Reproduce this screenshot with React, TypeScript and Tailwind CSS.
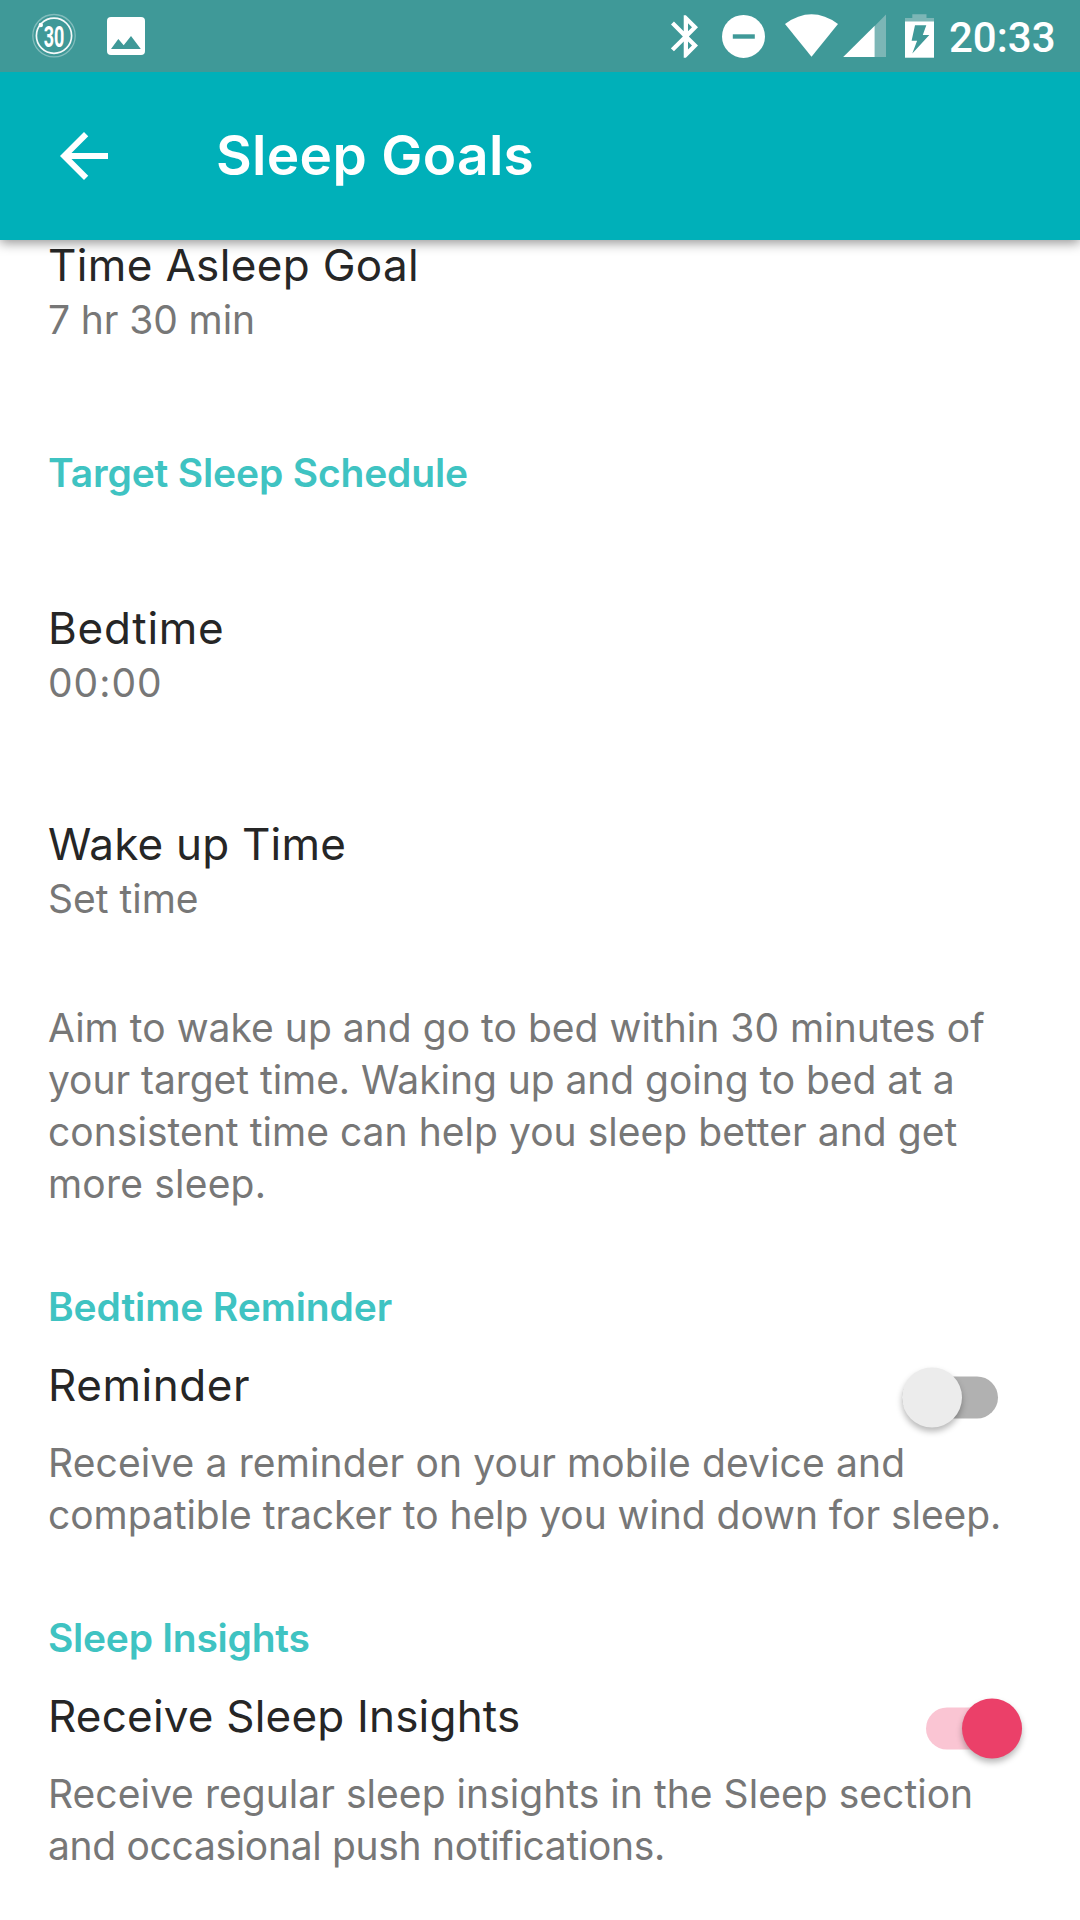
import type { ReactNode } from 'react';

function StatusBar() {
  return (
    <div className="relative z-20 flex h-[72px] bg-[#3f9998] pl-8 text-white">
      <svg width="44" height="72" viewBox="32 0 44 72" fill="none" stroke="currentColor">
        <circle cx="54" cy="35.7" r="21.2" strokeWidth="1.3" opacity="0.35" />
        <circle cx="54" cy="35.7" r="17.6" strokeWidth="1.7" opacity="0.95" />
        <circle cx="40.8" cy="25" r="2.2" fill="currentColor" stroke="none" />
        <text x="43.8" y="46.6" fontFamily="Roboto, sans-serif" fontSize="29" fontWeight="700" textLength="20.6" lengthAdjust="spacingAndGlyphs" fill="currentColor" stroke="none">30</text>
      </svg>
      <svg className="ml-[31px]" width="38" height="72" viewBox="107 0 38 72">
        <rect x="107" y="17" width="38" height="38" rx="4" fill="currentColor" />
        <path d="M111 49l7.3-10 5.4 6.3L131 36l9.8 13z" fill="#3f9998" />
      </svg>
      <svg className="ml-[526px]" width="27" height="72" viewBox="671 0 27 72">
        <path
          transform="translate(660.3 10.9) scale(2.13)"
          d="M17.71 7.71L12 2h-1v7.59L6.41 5 5 6.41 10.59 12 5 17.59 6.41 19 11 14.41V22h1l5.71-5.71-4.3-4.29 4.3-4.29zM13 5.83l1.88 1.88L13 9.59V5.83zm1.88 10.46L13 18.17v-3.76l1.88 1.88z"
          fill="currentColor"
        />
      </svg>
      <svg className="ml-6" width="43" height="72" viewBox="722 0 43 72">
        <circle cx="743.5" cy="36.4" r="21.5" fill="currentColor" />
        <rect x="732.8" y="34.3" width="22" height="4.4" fill="#3f9998" />
      </svg>
      <svg className="ml-5" width="53" height="72" viewBox="785 0 53 72">
        <path d="M785 24Q811.5 4.7 838 24L811.5 56.8z" fill="currentColor" />
      </svg>
      <svg className="ml-[5px]" width="43" height="72" viewBox="843 0 43 72">
        <path d="M874.7 26V57H886V14.5z" fill="#7cb6b6" />
        <path d="M843.2 57L874.7 25.8V57z" fill="currentColor" />
      </svg>
      <svg className="ml-[19px]" width="29" height="72" viewBox="905 0 29 72">
        <path d="M905 18h7.3v-3.8h14.2V18H934v4h-29z" fill="#7cb6b6" />
        <rect x="905" y="21.5" width="29" height="36.2" fill="currentColor" />
        <path d="M915 25.3h11.3l-3.5 9.6h6.5L912.3 53.5l4.8-12.8h-5.5z" fill="#3f9998" />
      </svg>
      <span className="ml-[15px] font-['Roboto',sans-serif] text-[42px] leading-[75px] font-medium">20:33</span>
    </div>
  );
}

function AppBar() {
  return (
    <header className="relative z-10 flex h-[168px] items-center bg-[#00b0b9] pl-12 text-white shadow-[0_3px_11px_rgba(0,0,0,0.42)]">
      <svg width="72" height="72" viewBox="0 0 24 24" fill="currentColor">
        <path d="M20 11H7.83l5.59-5.59L12 4l-8 8 8 8 1.41-1.41L7.83 13H20v-2z" />
      </svg>
      <h1 className="mb-0.5 ml-24 text-[55px] leading-[72px] font-semibold tracking-[0.3px]">Sleep Goals</h1>
    </header>
  );
}

function SectionHeading({ className, children }: { className: string; children: ReactNode }) {
  return <h2 className={`text-[39px] leading-[52px] font-semibold text-[#3fc3c2] ${className}`}>{children}</h2>;
}

function Title({ className = '', children }: { className?: string; children: ReactNode }) {
  return <div className={`text-[44px] leading-[50px] text-[#262626] ${className}`}>{children}</div>;
}

function Detail({ className = '', children }: { className?: string; children: ReactNode }) {
  return <p className={`text-[39px] leading-[52px] whitespace-nowrap text-[#777777] ${className}`}>{children}</p>;
}

function Switch({ on }: { on: boolean }) {
  return (
    <button
      role="switch"
      aria-checked={on}
      className={`flex h-[61px] w-[120px] items-center ${on ? 'translate-y-[12.5px] justify-end' : 'translate-y-[12.5px] justify-start'}`}
    >
      <span className={`flex h-[42px] w-[96px] items-center rounded-full ${on ? 'justify-end bg-[#fac5d3]' : 'justify-start bg-[#b1b1b1]'}`}>
        <span
          className={`size-[60px] shrink-0 rounded-full shadow-[0_4px_6px_rgba(0,0,0,0.28)] ${on ? 'bg-[#eb4069]' : 'bg-[#ececec]'}`}
        />
      </span>
    </button>
  );
}

export default function App() {
  return (
    <div className="h-[1920px] w-[1080px] overflow-hidden bg-white font-['Inter',sans-serif]">
      <StatusBar />
      <AppBar />
      <main className="pr-[58px] pl-12">
        <Title className="tracking-[0.35px]">Time Asleep Goal</Title>
        <Detail className="mt-1 tracking-[-0.1px]">7 hr 30 min</Detail>

        <SectionHeading className="mt-[101px] tracking-[-0.16px]">Target Sleep Schedule</SectionHeading>
        <Title className="mt-[104px] tracking-[0.75px]">Bedtime</Title>
        <Detail className="mt-1 tracking-[0.99px]">00:00</Detail>
        <Title className="mt-[110px] tracking-[0.2px]">Wake up Time</Title>
        <Detail className="mt-1">Set time</Detail>
        <Detail className="mt-[77px]">
          <span className="tracking-[0.03px]">Aim to wake up and go to bed within 30 minutes of</span>
          <br />
          <span className="tracking-[-0.05px]">your target time. Waking up and going to bed at a</span>
          <br />
          <span className="tracking-[0.04px]">consistent time can help you sleep better and get</span>
          <br />
          <span className="tracking-[0.2px]">more sleep.</span>
        </Detail>

        <SectionHeading className="mt-[71px] tracking-[-0.1px]">Bedtime Reminder</SectionHeading>
        <div className="mt-[27px] flex h-[50px] items-center justify-between">
          <Title className="tracking-[0.55px]">Reminder</Title>
          <Switch on={false} />
        </div>
        <Detail className="mt-[27px]">
          <span className="tracking-[0.12px]">Receive a reminder on your mobile device and</span>
          <br />
          <span className="tracking-[-0.05px]">compatible tracker to help you wind down for sleep.</span>
        </Detail>

        <SectionHeading className="mt-[71px] tracking-[-0.26px]">Sleep Insights</SectionHeading>
        <div className="mt-[27px] flex h-[50px] items-center justify-between">
          <Title className="tracking-[0.2px]">Receive Sleep Insights</Title>
          <Switch on />
        </div>
        <Detail className="mt-[27px]">
          <span className="tracking-[0.04px]">Receive regular sleep insights in the Sleep section</span>
          <br />
          <span className="tracking-[-0.32px]">and occasional push notifications.</span>
        </Detail>
      </main>
    </div>
  );
}
